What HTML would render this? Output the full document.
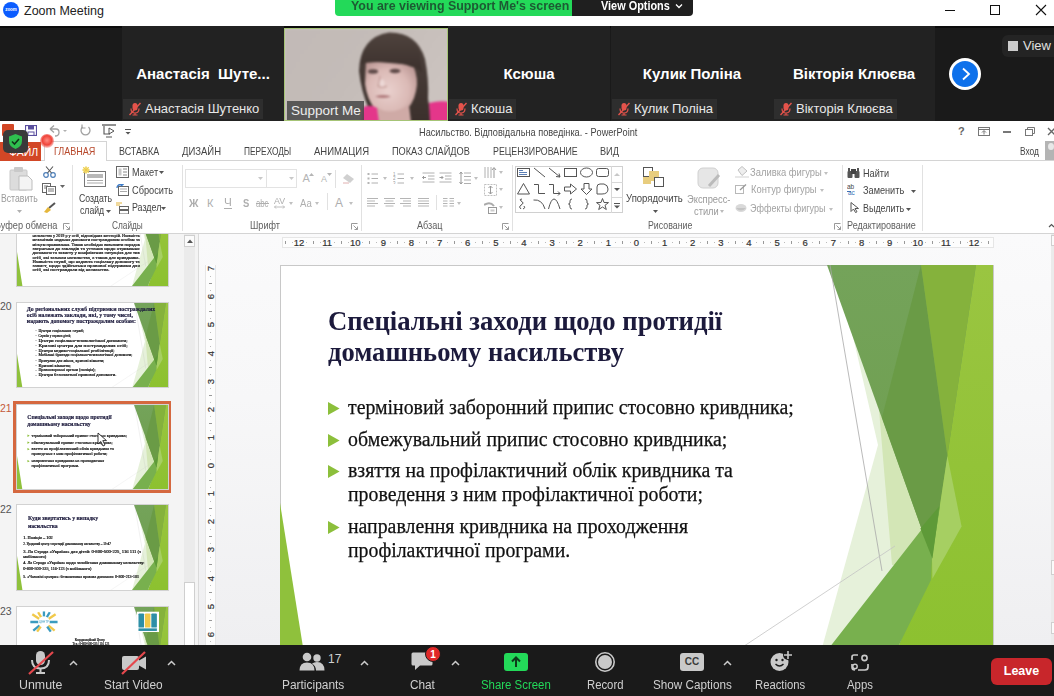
<!DOCTYPE html>
<html><head><meta charset="utf-8">
<style>
*{margin:0;padding:0;box-sizing:border-box}
html,body{width:1054px;height:696px;overflow:hidden;background:#fff;font-family:"Liberation Sans",sans-serif}
.a{position:absolute}
#top{left:0;top:0;width:1054px;height:26px;background:#fff}
#gal{left:0;top:26px;width:1054px;height:95px;background:#1a1a1a}
.tile{position:absolute;top:0;height:95px;width:162px;background:#222}
.tname{position:absolute;left:0;right:0;top:39px;text-align:center;color:#fff;font-weight:bold;font-size:15px;letter-spacing:0px}
.tlab{position:absolute;left:1px;top:73px;height:20px;background:#2e2e2e;color:#e8e8e8;font-size:13px;line-height:20px;padding-left:22px;padding-right:4px}
.mic{position:absolute;left:5px;top:3px;width:14px;height:14px}
#ppt{left:0;top:121px;width:1054px;height:524px;background:#fff}
#bar{left:0;top:645px;width:1054px;height:51px;background:#1a1a1a}
.tab{position:absolute;top:145px;font-size:10.5px;color:#444;white-space:nowrap}
.th .a{-webkit-text-stroke:0.8px currentColor !important}
.lbl{position:absolute;top:33px;color:#d0d0d0;font-size:12.5px;white-space:nowrap}
</style></head><body>
<svg width="0" height="0" style="position:absolute"><defs><symbol id="facet" viewBox="0 0 713 401">
<defs><linearGradient id="gT1" x1="0" y1="0" x2="0" y2="1"><stop offset="0" stop-color="#74a35a"/><stop offset="1" stop-color="#6e9e4d"/></linearGradient>
<linearGradient id="gB" x1="0" y1="0" x2="0" y2="1"><stop offset="0" stop-color="#9ac541"/><stop offset="1" stop-color="#8cc12f"/></linearGradient></defs>
<path d="M0 238 L26 401 L0 401Z" fill="#8fc13c"/>
<path d="M568 50 L598 180 L537 401 L713 401 L713 50Z" fill="#e6f1da"/>
<path d="M599 145 L612 300 L713 300 L713 100 L640 100Z" fill="#d3e6b6"/>
<path d="M641 0 L713 0 L713 401 L611 401 L652 293Z" fill="url(#gB)"/>
<path d="M547 0 L696 0 L652 293Z" fill="url(#gT1)"/>
<path d="M641 0 L602 152.6 L652 293 L667.4 191Z" fill="#6a9b46"/>
<path d="M641 0 L696 0 L667.4 191Z" fill="#85b23c"/>
<path d="M667.4 191 L681.6 261.5 L652.4 313.8 L652 293Z" fill="#a6cf62"/>
<path d="M535 401 L660 241 L652 293 L651 315 L619 380 L611 401Z" fill="#78b04e"/>
<path d="M640.4 263.5 L659.5 241 L652.4 293.7Z" fill="#5e9a38"/>
<path d="M550 0 L602 306" stroke="#a8a8a8" stroke-width="0.8" fill="none"/>
<path d="M615 281 L434 401" stroke="#c4c4c4" stroke-width="0.8" fill="none"/>
</symbol></defs></svg>
<!-- TITLE BAR -->
<div id="top" class="a">
  <div class="a" style="left:3px;top:2px;width:16px;height:16px;border-radius:50%;background:#0b5cff"></div>
  <div class="a" style="left:3px;top:7px;width:16px;text-align:center;font-size:4.5px;line-height:5px;color:#fff;font-weight:bold">zoom</div>
  <div class="a" style="left:24px;top:4px;font-size:12.5px;color:#222">Zoom Meeting</div>
  <div class="a" style="left:335px;top:0;width:238px;height:16px;background:#23d959;border-radius:0 0 0 4px"></div>
  <div class="a" style="left:351px;top:0px;font-size:12px;font-weight:bold;color:#1d5a33;line-height:12px;--tw:218px;transform:scaleX(1.033);transform-origin:0 0">You are viewing Support Me's screen</div>
  <div class="a" style="left:572px;top:0;width:121px;height:16px;background:#1f1f1f;border-radius:0 0 4px 0"></div>
  <div class="a" style="left:601px;top:0px;font-size:12px;font-weight:bold;color:#fff;line-height:12px;--tw:69px;transform:scaleX(0.908);transform-origin:0 0">View Options</div>
  <svg class="a" style="left:675px;top:3px" width="8" height="6"><path d="M1 1.5 L4 4.5 L7 1.5" stroke="#fff" stroke-width="1.3" fill="none"/></svg>
  <div class="a" style="left:945px;top:10px;width:10px;height:1px;background:#111"></div>
  <div class="a" style="left:990px;top:5px;width:10px;height:10px;border:1px solid #111"></div>
  <svg class="a" style="left:1035px;top:4px" width="12" height="12"><path d="M1 1 L11 11 M11 1 L1 11" stroke="#111" stroke-width="1.1"/></svg>
</div>
<!-- GALLERY -->
<div id="gal" class="a"><div class="a" style="left:0;top:0;width:1054px;height:1.5px;background:#0c0c0c"></div>
  <div class="tile" style="left:122px"><div class="tname" style="left:0;right:0">Анастасія&nbsp; Шуте...</div><div class="tlab"><svg class="mic" viewBox="0 0 14 14"><rect x="4.5" y="1" width="5" height="7.5" rx="2.5" fill="#e5534b"/><path d="M3 6.5 Q3 11 7 11 Q11 11 11 6.5 M7 11 V13 M4.5 13 H9.5" stroke="#e5534b" stroke-width="1.2" fill="none"/><path d="M1.5 13 L12.5 1" stroke="#e5534b" stroke-width="1.4"/></svg>Анастасія Шутенко</div></div>
  <div class="tile" style="left:284px;background:#cfc8c4;border:1.5px solid #a6c476;top:2px;height:93px;width:164px;overflow:hidden" id="vid"><svg class="a" style="left:0;top:0;filter:blur(0.9px)" width="164" height="93" viewBox="0 0 164 93">
<defs>
<linearGradient id="bg" x1="0" y1="0" x2="1" y2="0.4"><stop offset="0" stop-color="#c2bab7"/><stop offset="0.5" stop-color="#c4bcb8"/><stop offset="1" stop-color="#cbc3bf"/></linearGradient>
<radialGradient id="face" cx="0.45" cy="0.55" r="0.65"><stop offset="0" stop-color="#e9d0cd"/><stop offset="0.6" stop-color="#dbbab6"/><stop offset="1" stop-color="#b99592"/></radialGradient>
<linearGradient id="hair" x1="0" y1="0" x2="0" y2="1"><stop offset="0" stop-color="#4e423d"/><stop offset="1" stop-color="#3b302c"/></linearGradient>
</defs>
<rect width="164" height="93" fill="url(#bg)"/>
<path d="M74 42 Q75 8 104 3.5 Q132 3 140 30 Q144 50 143 70 L147 93 L120 93 Q116 80 114 72 L84 80 Q76 62 74 42Z" fill="url(#hair)"/>
<path d="M81 32 L128 36 Q134 50 131 62 Q128 77 118 83 L106 86 Q96 85 90 80 Q82 70 80 55Z" fill="url(#face)"/>
<path d="M92 78 Q104 88 124 76 L126 93 L90 93Z" fill="#cfaaa6"/>
<path d="M75 36 Q77 9 104 5 Q127 5 135 24 L137 44 Q132 38 127 38 Q110 31 80 34Z" fill="url(#hair)"/>
<ellipse cx="88" cy="42.5" rx="5" ry="2.2" fill="#5e4a48"/>
<ellipse cx="110" cy="42" rx="5.5" ry="2.2" fill="#5e4a48"/>
<path d="M95 47 Q94 54 93 57 Q97 60 102 57" stroke="#c49e9a" stroke-width="1.2" fill="none"/>
<ellipse cx="97" cy="54" rx="2.5" ry="3.5" fill="#f1e0de" opacity=".7"/>
<path d="M90 67.5 Q98 65 106 67.5 Q98 70 90 67.5Z" fill="#a86e70"/>
<path d="M76 93 L78 78 Q86 75 92 79 L94 93Z" fill="#e4368a"/>
<path d="M144 74 Q156 71 164 73 L164 93 L145 93Z" fill="#e4368a"/>
</svg>
<div class="a" style="left:2px;top:72px;width:77px;height:19px;background:rgba(70,70,70,.85)"></div>
<div class="a" style="left:6px;top:73px;font-size:13.5px;color:#eee;line-height:18px">Support Me</div></div>
  <div class="tile" style="left:448px"><div class="tname">Ксюша</div><div class="tlab"><svg class="mic" viewBox="0 0 14 14"><rect x="4.5" y="1" width="5" height="7.5" rx="2.5" fill="#e5534b"/><path d="M3 6.5 Q3 11 7 11 Q11 11 11 6.5 M7 11 V13 M4.5 13 H9.5" stroke="#e5534b" stroke-width="1.2" fill="none"/><path d="M1.5 13 L12.5 1" stroke="#e5534b" stroke-width="1.4"/></svg>Ксюша</div></div>
  <div class="tile" style="left:611px"><div class="tname">Кулик Поліна</div><div class="tlab"><svg class="mic" viewBox="0 0 14 14"><rect x="4.5" y="1" width="5" height="7.5" rx="2.5" fill="#e5534b"/><path d="M3 6.5 Q3 11 7 11 Q11 11 11 6.5 M7 11 V13 M4.5 13 H9.5" stroke="#e5534b" stroke-width="1.2" fill="none"/><path d="M1.5 13 L12.5 1" stroke="#e5534b" stroke-width="1.4"/></svg>Кулик Поліна</div></div>
  <div class="tile" style="left:773px"><div class="tname">Вікторія Клюєва</div><div class="tlab"><svg class="mic" viewBox="0 0 14 14"><rect x="4.5" y="1" width="5" height="7.5" rx="2.5" fill="#e5534b"/><path d="M3 6.5 Q3 11 7 11 Q11 11 11 6.5 M7 11 V13 M4.5 13 H9.5" stroke="#e5534b" stroke-width="1.2" fill="none"/><path d="M1.5 13 L12.5 1" stroke="#e5534b" stroke-width="1.4"/></svg>Вікторія Клюєва</div></div>
  <div class="a" style="left:949px;top:32px;width:32px;height:32px;border-radius:50%;background:#fff"></div>
  <div class="a" style="left:952px;top:35px;width:26px;height:26px;border-radius:50%;background:#0e71eb"></div>
  <svg class="a" style="left:959px;top:40px" width="14" height="16"><path d="M4 2.5 L10 8 L4 13.5" stroke="#fff" stroke-width="1.8" fill="none"/></svg>
  <div class="a" style="left:1002px;top:9px;width:60px;height:22px;border-radius:6px;background:#242424"></div>
  <div class="a" style="left:1008px;top:15px;width:10px;height:10px;background:#ccc"></div>
  <div class="a" style="left:1023px;top:12px;font-size:13px;color:#e0e0e0">View</div>
</div>
<!-- PPT -->
<div id="ppt" class="a" style="top:0;height:0">
<div class="a" style="left:0;top:121px;width:1054px;height:113px;background:#fff"></div>
<div class="a" style="left:0;top:160px;width:1054px;height:1px;background:#d4d4d4"></div>
<div class="a" style="left:0;top:233px;width:1054px;height:1px;background:#d4d4d4"></div>
<!-- QAT -->
<div class="a" style="left:2px;top:124px;width:12px;height:12px;background:#d24726;border-radius:1px"></div>
<svg class="a" style="left:25px;top:125px" width="12" height="11"><rect x="0.5" y="0.5" width="11" height="10" fill="none" stroke="#5a4f9e" stroke-width="1.2"/><rect x="3" y="0.5" width="6" height="4" fill="#5a4f9e"/><rect x="3" y="7" width="6" height="3.5" fill="none" stroke="#5a4f9e"/></svg>
<svg class="a" style="left:48px;top:124px" width="22" height="13"><path d="M2 5 L6 1.5 M2 5 L6 8.5 M2 5 H8 Q11 5 11 8.5 Q11 12 7 12" stroke="#a0a0a0" stroke-width="1.3" fill="none"/><path d="M15 6 L19 6 L17 8Z" fill="#b0b0b0"/></svg>
<svg class="a" style="left:79px;top:124px" width="13" height="13"><path d="M9.5 3 A4.5 4.5 0 1 1 3.5 3" stroke="#a0a0a0" stroke-width="1.3" fill="none"/><path d="M3 0.5 V4 H6.5" stroke="#a0a0a0" stroke-width="1.2" fill="none"/></svg>
<svg class="a" style="left:101px;top:124px" width="16" height="14"><path d="M1 1 H15" stroke="#555" stroke-width="1.3"/><path d="M3 2 V10 H9 M5 13 H11" stroke="#555" stroke-width="1.1" fill="none"/><path d="M8 4 L13 7 L8 10Z" fill="none" stroke="#555" stroke-width="1"/></svg>
<svg class="a" style="left:124px;top:129px" width="8" height="6"><path d="M1 0.5 H7" stroke="#555"/><path d="M1.5 3 H6.5 L4 5.5Z" fill="#555"/></svg>
<div class="a" style="left:0;top:126px;width:1054px;text-align:center;font-size:10.5px;color:#444;padding-left:0px;--tw:218.6px;transform:scaleX(0.874);transform-origin:0 0;left:419px;width:auto;text-align:left">Насильство. Відповідальна поведінка. - PowerPoint</div>
<div class="a" style="left:958px;top:125px;font-size:11px;font-weight:bold;color:#666">?</div>
<svg class="a" style="left:978px;top:127px" width="12" height="9"><rect x="0.5" y="0.5" width="11" height="8" fill="none" stroke="#777"/><path d="M0.5 2.5 H11.5 M6 7.5 V4 M4 5.5 L6 3.5 L8 5.5" stroke="#777" fill="none"/></svg>
<div class="a" style="left:1003px;top:131px;width:8px;height:2px;background:#777"></div>
<svg class="a" style="left:1025px;top:127px" width="10" height="9"><rect x="0.5" y="2.5" width="7" height="6" fill="none" stroke="#777"/><path d="M2.5 2.5 V0.5 H9.5 V6.5 H7.5" stroke="#777" fill="none"/></svg>
<svg class="a" style="left:1047px;top:127px" width="8" height="9"><path d="M1 1 L8 8 M8 1 L1 8" stroke="#666" stroke-width="1.4"/></svg>
<!-- tabs -->
<div class="a" style="left:0;top:142px;width:41px;height:19px;background:#d24726"></div>
<div class="a" style="left:9px;top:146px;font-size:10.5px;color:#fff">ФАЙЛ</div>
<div class="a" style="left:44px;top:141px;width:63px;height:20px;background:#fff;border:1px solid #d4d4d4;border-bottom:none"></div>
<div class="tab" style="left:54px;color:#b7472a;--tw:41.2px;transform:scaleX(0.858);transform-origin:0 0">ГЛАВНАЯ</div>
<div class="tab" style="left:119px;--tw:40.1px;transform:scaleX(0.853);transform-origin:0 0">ВСТАВКА</div>
<div class="tab" style="left:182px;--tw:38.9px;transform:scaleX(0.905);transform-origin:0 0">ДИЗАЙН</div>
<div class="tab" style="left:244px;--tw:47.6px;transform:scaleX(0.793);transform-origin:0 0">ПЕРЕХОДЫ</div>
<div class="tab" style="left:314px;--tw:55.2px;transform:scaleX(0.905);transform-origin:0 0">АНИМАЦИЯ</div>
<div class="tab" style="left:392px;--tw:77.9px;transform:scaleX(0.875);transform-origin:0 0">ПОКАЗ СЛАЙДОВ</div>
<div class="tab" style="left:493px;--tw:84.7px;transform:scaleX(0.839);transform-origin:0 0">РЕЦЕНЗИРОВАНИЕ</div>
<div class="tab" style="left:600px;--tw:19.2px;transform:scaleX(0.873);transform-origin:0 0">ВИД</div>
<div class="a" style="left:1020px;top:145px;font-size:10.5px;color:#444;--tw:19.1px;transform:scaleX(0.796);transform-origin:0 0">Вход</div>
<div class="a" style="left:1045px;top:141px;width:9px;height:19px;background:#b4b4b4"></div>
<div class="a" style="left:1048px;top:143px;width:6px;height:7px;border-radius:50%;background:#e8e8e8"></div>
<!--CONTENT--><div class="a" style="left:0;top:234px;width:1054px;height:411px;overflow:hidden"><div class="a" style="left:0;top:-234px;width:1054px;height:696px">
<div class="a" style="left:0;top:234px;width:198px;height:411px;background:#f4f4f4"></div>
<div class="a" style="left:198px;top:234px;width:1px;height:411px;background:#dadada"></div>
<div class="a" style="left:199px;top:234px;width:855px;height:411px;background:linear-gradient(#fafafb,#f7f7f8 40%,#efeff1)"></div>
<div class="a" style="left:184px;top:234px;width:11px;height:411px;background:#ebebeb"></div>
<div class="a" style="left:184px;top:235px;width:11px;height:12px;background:#fbfbfb;border:1px solid #cfcfcf"></div>
<svg class="a" style="left:186.5px;top:239px" width="6" height="4"><path d="M0 4 L3 0.5 L6 4Z" fill="#555"/></svg>
<div class="a" style="left:184px;top:582px;width:11px;height:70px;background:#fff;border:1px solid #cfcfcf"></div>
<div class="a" style="left:1051px;top:234px;width:3px;height:411px;background:#ebebeb"></div>
<div class="a" style="left:1051px;top:235px;width:5px;height:11px;background:#fbfbfb;border:1px solid #cfcfcf"></div>
<div class="a" style="left:1051px;top:560px;width:5px;height:15px;background:#fbfbfb;border:1px solid #cfcfcf"></div>
<div class="a" style="left:1051px;top:622px;width:5px;height:12px;background:#fbfbfb;border:1px solid #cfcfcf"></div>
<div class="a" style="left:15.5px;top:200.0px;width:153px;height:86.5px;background:#fff;border:1px solid #d2d2d2;overflow:hidden"><div class="a th" style="left:0;top:0;width:713px;height:401px;transform:scale(0.21388);transform-origin:0 0"><svg class="a" style="left:0;top:0" width="713" height="401" viewBox="0 0 713 401"><use href="#facet"/></svg><div class="a" style="left:72px;top:156.60px;font-size:16px;line-height:16px;color:#222;font-weight:normal;font-family:'Liberation Serif',serif;--tw:502px;transform:scaleX(1.215);transform-origin:0 0;white-space:nowrap">насильства у 2019 р у осіб, відповідних категорій. Наявність</div>
<div class="a" style="left:72px;top:176.40px;font-size:16px;line-height:16px;color:#222;font-weight:normal;font-family:'Liberation Serif',serif;--tw:502px;transform:scaleX(1.335);transform-origin:0 0;white-space:nowrap">механізмів надання допомоги постраждалим особам за</div>
<div class="a" style="left:72px;top:196.20px;font-size:16px;line-height:16px;color:#222;font-weight:normal;font-family:'Liberation Serif',serif;--tw:502px;transform:scaleX(1.287);transform-origin:0 0;white-space:nowrap">місцем проживання. Також необхідно визначити порядок</div>
<div class="a" style="left:72px;top:216.00px;font-size:16px;line-height:16px;color:#222;font-weight:normal;font-family:'Liberation Serif',serif;--tw:502px;transform:scaleX(1.464);transform-origin:0 0;white-space:nowrap">звернення до закладів та установ щодо отримання</div>
<div class="a" style="left:72px;top:235.80px;font-size:16px;line-height:16px;color:#222;font-weight:normal;font-family:'Liberation Serif',serif;--tw:502px;transform:scaleX(1.372);transform-origin:0 0;white-space:nowrap">допомоги та захисту у конфліктних ситуаціях для тих</div>
<div class="a" style="left:72px;top:255.60px;font-size:16px;line-height:16px;color:#222;font-weight:normal;font-family:'Liberation Serif',serif;--tw:502px;transform:scaleX(1.406);transform-origin:0 0;white-space:nowrap">осіб, які зазнали насильства, а також для кривдника.</div>
<div class="a" style="left:72px;top:275.40px;font-size:16px;line-height:16px;color:#222;font-weight:normal;font-family:'Liberation Serif',serif;--tw:502px;transform:scaleX(1.387);transform-origin:0 0;white-space:nowrap">Наявність служб, що надають соціальну допомогу та</div>
<div class="a" style="left:72px;top:295.20px;font-size:16px;line-height:16px;color:#222;font-weight:normal;font-family:'Liberation Serif',serif;--tw:502px;transform:scaleX(1.517);transform-origin:0 0;white-space:nowrap">захист, щодо здійснення правової підтримки для</div>
<div class="a" style="left:72px;top:315.00px;font-size:16px;line-height:16px;color:#222;font-weight:normal;font-family:'Liberation Serif',serif;--tw:360px;transform:scaleX(1.406);transform-origin:0 0;white-space:nowrap">осіб, які постраждали від насильства.</div>
</div></div>
<div class="a" style="left:0px;top:199.61px;font-size:10.5px;line-height:10.5px;color:#555;font-weight:normal;white-space:nowrap">19</div>
<div class="a" style="left:15.5px;top:301.5px;width:153px;height:86.5px;background:#fff;border:1px solid #d2d2d2;overflow:hidden"><div class="a th" style="left:0;top:0;width:713px;height:401px;transform:scale(0.21388);transform-origin:0 0"><svg class="a" style="left:0;top:0" width="713" height="401" viewBox="0 0 713 401"><use href="#facet"/></svg><div class="a" style="left:46px;top:17.39px;font-size:27px;line-height:27px;color:#1c1a3c;font-weight:bold;font-family:'Liberation Serif',serif;white-space:nowrap">До регіональних служб підтримки постраждалих</div>
<div class="a" style="left:46px;top:45.39px;font-size:27px;line-height:27px;color:#1c1a3c;font-weight:bold;font-family:'Liberation Serif',serif;white-space:nowrap">осіб належать заклади, які, у тому числі,</div>
<div class="a" style="left:46px;top:73.39px;font-size:27px;line-height:27px;color:#1c1a3c;font-weight:bold;font-family:'Liberation Serif',serif;white-space:nowrap">надають допомогу постраждалим особам:</div>
<div class="a" style="left:100px;top:122.44px;font-size:15px;line-height:15px;color:#222;font-weight:normal;font-family:'Liberation Serif',serif;--tw:214px;transform:scaleX(1.259);transform-origin:0 0;white-space:nowrap">Центри соціальних служб;</div>
<div class="a" style="left:86px;top:129.0px;width:6px;height:2px;background:#444"></div><div class="a" style="left:100px;top:145.64px;font-size:15px;line-height:15px;color:#222;font-weight:normal;font-family:'Liberation Serif',serif;--tw:152px;transform:scaleX(0.974);transform-origin:0 0;white-space:nowrap">Служби у справах дітей;</div>
<div class="a" style="left:86px;top:152.2px;width:6px;height:2px;background:#444"></div><div class="a" style="left:100px;top:168.84px;font-size:15px;line-height:15px;color:#222;font-weight:normal;font-family:'Liberation Serif',serif;--tw:416px;transform:scaleX(1.496);transform-origin:0 0;white-space:nowrap">Центри соціально-психологічної допомоги;</div>
<div class="a" style="left:86px;top:175.4px;width:6px;height:2px;background:#444"></div><div class="a" style="left:100px;top:192.04px;font-size:15px;line-height:15px;color:#222;font-weight:normal;font-family:'Liberation Serif',serif;--tw:418px;transform:scaleX(1.646);transform-origin:0 0;white-space:nowrap">Кризові центри для постраждалих осіб;</div>
<div class="a" style="left:86px;top:198.6px;width:6px;height:2px;background:#444"></div><div class="a" style="left:100px;top:215.24px;font-size:15px;line-height:15px;color:#222;font-weight:normal;font-family:'Liberation Serif',serif;--tw:355px;transform:scaleX(1.414);transform-origin:0 0;white-space:nowrap">Центри медико-соціальної реабілітації;</div>
<div class="a" style="left:86px;top:221.8px;width:6px;height:2px;background:#444"></div><div class="a" style="left:100px;top:238.44px;font-size:15px;line-height:15px;color:#222;font-weight:normal;font-family:'Liberation Serif',serif;--tw:440px;transform:scaleX(1.275);transform-origin:0 0;white-space:nowrap">Мобільні бригади соціально-психологічної допомоги;</div>
<div class="a" style="left:86px;top:245.0px;width:6px;height:2px;background:#444"></div><div class="a" style="left:100px;top:261.64px;font-size:15px;line-height:15px;color:#222;font-weight:normal;font-family:'Liberation Serif',serif;--tw:308px;transform:scaleX(1.273);transform-origin:0 0;white-space:nowrap">Притулки для жінок, кризові кімнати;</div>
<div class="a" style="left:86px;top:268.2px;width:6px;height:2px;background:#444"></div><div class="a" style="left:100px;top:284.84px;font-size:15px;line-height:15px;color:#222;font-weight:normal;font-family:'Liberation Serif',serif;--tw:152px;transform:scaleX(1.407);transform-origin:0 0;white-space:nowrap">Кризові кімнати;</div>
<div class="a" style="left:86px;top:291.4px;width:6px;height:2px;background:#444"></div><div class="a" style="left:100px;top:308.04px;font-size:15px;line-height:15px;color:#222;font-weight:normal;font-family:'Liberation Serif',serif;--tw:268px;transform:scaleX(1.288);transform-origin:0 0;white-space:nowrap">Правоохоронні органи (поліція);</div>
<div class="a" style="left:86px;top:314.6px;width:6px;height:2px;background:#444"></div><div class="a" style="left:100px;top:331.24px;font-size:15px;line-height:15px;color:#222;font-weight:normal;font-family:'Liberation Serif',serif;--tw:364px;transform:scaleX(1.427);transform-origin:0 0;white-space:nowrap">Центри безоплатної правової допомоги.</div>
<div class="a" style="left:86px;top:337.8px;width:6px;height:2px;background:#444"></div></div></div>
<div class="a" style="left:0px;top:301.11px;font-size:10.5px;line-height:10.5px;color:#555;font-weight:normal;white-space:nowrap">20</div>
<div class="a" style="left:13px;top:400.5px;width:158px;height:92px;background:#d5683f"></div>
<div class="a" style="left:15.5px;top:403.5px;width:153px;height:86.5px;background:#fff;border:1px solid #d2d2d2;overflow:hidden"><div class="a th" style="left:0;top:0;width:713px;height:401px;transform:scale(0.21388);transform-origin:0 0"><svg class="a" style="left:0;top:0" width="713" height="401" viewBox="0 0 713 401"><use href="#facet"/></svg><div class="a" style="left:48px;top:43.15px;font-size:26.8px;line-height:26.8px;color:#1c1a3c;font-weight:bold;font-family:'Liberation Serif',serif;--tw:394px;transform:scaleX(0.995);transform-origin:0 0;white-space:nowrap">Спеціальні заходи щодо протидії</div>
<div class="a" style="left:48px;top:74.46px;font-size:26.8px;line-height:26.8px;color:#1c1a3c;font-weight:bold;font-family:'Liberation Serif',serif;--tw:296.4px;transform:scaleX(0.991);transform-origin:0 0;white-space:nowrap">домашньому насильству</div>
<div class="a" style="left:68px;top:132.25px;font-size:20px;line-height:20px;color:#111;font-weight:normal;font-family:'Liberation Serif',serif;transform:scaleX(0.99);transform-origin:0 0;-webkit-text-stroke:0.25px #111;white-space:nowrap">терміновий заборонний припис стосовно кривдника;</div>
<div class="a" style="left:68px;top:164.25px;font-size:20px;line-height:20px;color:#111;font-weight:normal;font-family:'Liberation Serif',serif;transform:scaleX(0.99);transform-origin:0 0;-webkit-text-stroke:0.25px #111;white-space:nowrap">обмежувальний припис стосовно кривдника;</div>
<div class="a" style="left:68px;top:195.25px;font-size:20px;line-height:20px;color:#111;font-weight:normal;font-family:'Liberation Serif',serif;transform:scaleX(0.99);transform-origin:0 0;-webkit-text-stroke:0.25px #111;white-space:nowrap">взяття на профілактичний облік кривдника та</div>
<div class="a" style="left:68px;top:219.25px;font-size:20px;line-height:20px;color:#111;font-weight:normal;font-family:'Liberation Serif',serif;transform:scaleX(0.99);transform-origin:0 0;-webkit-text-stroke:0.25px #111;white-space:nowrap">проведення з ним профілактичної роботи;</div>
<div class="a" style="left:68px;top:251.25px;font-size:20px;line-height:20px;color:#111;font-weight:normal;font-family:'Liberation Serif',serif;transform:scaleX(0.99);transform-origin:0 0;-webkit-text-stroke:0.25px #111;white-space:nowrap">направлення кривдника на проходження</div>
<div class="a" style="left:68px;top:275.25px;font-size:20px;line-height:20px;color:#111;font-weight:normal;font-family:'Liberation Serif',serif;transform:scaleX(0.99);transform-origin:0 0;-webkit-text-stroke:0.25px #111;white-space:nowrap">профілактичної програми.</div>
<svg class="a" style="left:48px;top:136.5px" width="12" height="13"><path d="M0 0 L11.6 6.5 L0 13Z" fill="#8cbf3b"/></svg><svg class="a" style="left:48px;top:168.5px" width="12" height="13"><path d="M0 0 L11.6 6.5 L0 13Z" fill="#8cbf3b"/></svg><svg class="a" style="left:48px;top:199.5px" width="12" height="13"><path d="M0 0 L11.6 6.5 L0 13Z" fill="#8cbf3b"/></svg><svg class="a" style="left:48px;top:255.5px" width="12" height="13"><path d="M0 0 L11.6 6.5 L0 13Z" fill="#8cbf3b"/></svg></div></div>
<div class="a" style="left:0px;top:403.11px;font-size:10.5px;line-height:10.5px;color:#c4593a;font-weight:normal;white-space:nowrap">21</div>
<div class="a" style="left:15.5px;top:504.2px;width:153px;height:86.5px;background:#fff;border:1px solid #d2d2d2;overflow:hidden"><div class="a th" style="left:0;top:0;width:713px;height:401px;transform:scale(0.21388);transform-origin:0 0"><svg class="a" style="left:0;top:0" width="713" height="401" viewBox="0 0 713 401"><use href="#facet"/></svg><div class="a" style="left:51px;top:47.39px;font-size:27px;line-height:27px;color:#1c1a3c;font-weight:bold;font-family:'Liberation Serif',serif;white-space:nowrap">Куди звертатись у випадку</div>
<div class="a" style="left:51px;top:85.39px;font-size:27px;line-height:27px;color:#1c1a3c;font-weight:bold;font-family:'Liberation Serif',serif;white-space:nowrap">насильства</div>
<div class="a" style="left:29px;top:146.28px;font-size:14px;line-height:14px;color:#222;font-weight:normal;font-family:'Liberation Serif',serif;--tw:139px;transform:scaleX(1.463);transform-origin:0 0;white-space:nowrap">1. Поліція – 102</div>
<div class="a" style="left:29px;top:178.28px;font-size:14px;line-height:14px;color:#222;font-weight:normal;font-family:'Liberation Serif',serif;--tw:410px;transform:scaleX(1.114);transform-origin:0 0;white-space:nowrap">2. Урядовий центр з протидії домашньому насильству – 15-47</div>
<div class="a" style="left:29px;top:213.28px;font-size:14px;line-height:14px;color:#222;font-weight:normal;font-family:'Liberation Serif',serif;--tw:550px;transform:scaleX(1.558);transform-origin:0 0;white-space:nowrap">3. Ла Страда «Україна» для дітей: 0-800-500-225, 116 111 (з</div>
<div class="a" style="left:29px;top:238.28px;font-size:14px;line-height:14px;color:#222;font-weight:normal;font-family:'Liberation Serif',serif;--tw:108px;transform:scaleX(1.500);transform-origin:0 0;white-space:nowrap">мобільного)</div>
<div class="a" style="left:29px;top:264.27px;font-size:14px;line-height:14px;color:#222;font-weight:normal;font-family:'Liberation Serif',serif;--tw:567px;transform:scaleX(1.414);transform-origin:0 0;white-space:nowrap">4. Ла Страда «Україна» щодо запобігання домашньому насильству:</div>
<div class="a" style="left:29px;top:292.27px;font-size:14px;line-height:14px;color:#222;font-weight:normal;font-family:'Liberation Serif',serif;--tw:319px;transform:scaleX(1.412);transform-origin:0 0;white-space:nowrap">0-800-500-335, 116-123 (з мобільного)</div>
<div class="a" style="left:29px;top:331.27px;font-size:14px;line-height:14px;color:#222;font-weight:normal;font-family:'Liberation Serif',serif;--tw:541px;transform:scaleX(1.320);transform-origin:0 0;white-space:nowrap">5. «Чоловічі центри»: безкоштовна правова допомога: 0-800-213-103</div>
</div></div>
<div class="a" style="left:0px;top:503.81px;font-size:10.5px;line-height:10.5px;color:#555;font-weight:normal;white-space:nowrap">22</div>
<div class="a" style="left:15.5px;top:606.2px;width:153px;height:86.5px;background:#fff;border:1px solid #d2d2d2;overflow:hidden"><div class="a th" style="left:0;top:0;width:713px;height:401px;transform:scale(0.21388);transform-origin:0 0"><svg class="a" style="left:0;top:0" width="713" height="401" viewBox="0 0 713 401"><use href="#facet"/></svg><svg class="a" style="left:56px;top:20px" width="140" height="100" viewBox="0 0 30 22"><g stroke-width="2.4"><path d="M15 11 L3 3" stroke="#f1c94a"/><path d="M15 11 L27 3" stroke="#f1c94a"/><path d="M15 11 L1 11" stroke="#3a9bbf"/><path d="M15 11 L29 11" stroke="#3a9bbf"/><path d="M15 11 L4 20" stroke="#3a9bbf"/><path d="M15 11 L26 20" stroke="#f1c94a"/><path d="M15 11 L15 0" stroke="#3a9bbf"/><path d="M15 11 L9 1" stroke="#f1c94a"/><path d="M15 11 L21 1" stroke="#3a9bbf"/><path d="M15 11 L8 21" stroke="#f1c94a"/><path d="M15 11 L22 21" stroke="#3a9bbf"/></g><circle cx="15" cy="11" r="6" fill="#fff"/><text x="15" y="12.5" font-size="3" text-anchor="middle" fill="#3a9bbf">ЦЕНТР</text></svg><div class="a" style="left:560px;top:22px;width:104px;height:95px;background:#fff"></div><div class="a" style="left:568px;top:30px;width:26px;height:66px;background:#2e8fa6;border-radius:4px"></div><div class="a" style="left:598px;top:30px;width:26px;height:66px;background:#f1c94a;border-radius:4px"></div><div class="a" style="left:628px;top:30px;width:26px;height:66px;background:#2e8fa6;border-radius:4px"></div><div class="a" style="left:568px;top:100px;width:86px;height:12px;background:#2e8fa6"></div><div class="a" style="left:270px;top:148.28px;font-size:14px;line-height:14px;color:#222;font-weight:normal;font-family:'Liberation Serif',serif;white-space:nowrap">Координаційний Центр</div>
<div class="a" style="left:260px;top:166.28px;font-size:14px;line-height:14px;color:#222;font-weight:normal;font-family:'Liberation Serif',serif;white-space:nowrap">Тел.: 0-800-500-335 | 116 123</div>
</div></div>
<div class="a" style="left:0px;top:605.81px;font-size:10.5px;line-height:10.5px;color:#555;font-weight:normal;white-space:nowrap">23</div>
<svg class="a" style="left:97px;top:432px" width="11" height="15"><path d="M1 1 V12 L3.8 9.5 L6 14 L8 13 L5.8 8.6 H9.5Z" fill="#fff" stroke="#222" stroke-width="0.9"/></svg>
<div class="a" style="left:204.5px;top:265px;width:11px;height:380px;background:#fdfdfd;border-left:1px solid #e6e6e6;border-right:1px solid #e6e6e6"></div>
<div class="a" style="left:281.5px;top:237px;width:712px;height:11px;background:#fdfdfd;border:1px solid #e6e6e6"></div>
<div class="a" style="left:288.94px;top:237px;width:20px;text-align:center;font-size:9.5px;line-height:11px;color:#333;-webkit-text-stroke:0.2px #333">12</div>
<div class="a" style="left:306.0px;top:242.0px;width:1px;height:1px;background:#bbb"></div>
<div class="a" style="left:313.0px;top:241.0px;width:1px;height:3px;background:#999"></div>
<div class="a" style="left:320.0px;top:242.0px;width:1px;height:1px;background:#bbb"></div>
<div class="a" style="left:291.9px;top:242.0px;width:1px;height:1px;background:#bbb"></div>
<div class="a" style="left:284.9px;top:241.0px;width:1px;height:3px;background:#999"></div>
<div class="a" style="left:317.07px;top:237px;width:20px;text-align:center;font-size:9.5px;line-height:11px;color:#333;-webkit-text-stroke:0.2px #333">11</div>
<div class="a" style="left:334.1px;top:242.0px;width:1px;height:1px;background:#bbb"></div>
<div class="a" style="left:341.1px;top:241.0px;width:1px;height:3px;background:#999"></div>
<div class="a" style="left:348.2px;top:242.0px;width:1px;height:1px;background:#bbb"></div>
<div class="a" style="left:345.2px;top:237px;width:20px;text-align:center;font-size:9.5px;line-height:11px;color:#333;-webkit-text-stroke:0.2px #333">10</div>
<div class="a" style="left:362.2px;top:242.0px;width:1px;height:1px;background:#bbb"></div>
<div class="a" style="left:369.3px;top:241.0px;width:1px;height:3px;background:#999"></div>
<div class="a" style="left:376.3px;top:242.0px;width:1px;height:1px;background:#bbb"></div>
<div class="a" style="left:373.33000000000004px;top:237px;width:20px;text-align:center;font-size:9.5px;line-height:11px;color:#333;-webkit-text-stroke:0.2px #333">9</div>
<div class="a" style="left:390.4px;top:242.0px;width:1px;height:1px;background:#bbb"></div>
<div class="a" style="left:397.4px;top:241.0px;width:1px;height:3px;background:#999"></div>
<div class="a" style="left:404.4px;top:242.0px;width:1px;height:1px;background:#bbb"></div>
<div class="a" style="left:401.46000000000004px;top:237px;width:20px;text-align:center;font-size:9.5px;line-height:11px;color:#333;-webkit-text-stroke:0.2px #333">8</div>
<div class="a" style="left:418.5px;top:242.0px;width:1px;height:1px;background:#bbb"></div>
<div class="a" style="left:425.5px;top:241.0px;width:1px;height:3px;background:#999"></div>
<div class="a" style="left:432.6px;top:242.0px;width:1px;height:1px;background:#bbb"></div>
<div class="a" style="left:429.59000000000003px;top:237px;width:20px;text-align:center;font-size:9.5px;line-height:11px;color:#333;-webkit-text-stroke:0.2px #333">7</div>
<div class="a" style="left:446.6px;top:242.0px;width:1px;height:1px;background:#bbb"></div>
<div class="a" style="left:453.7px;top:241.0px;width:1px;height:3px;background:#999"></div>
<div class="a" style="left:460.7px;top:242.0px;width:1px;height:1px;background:#bbb"></div>
<div class="a" style="left:457.72px;top:237px;width:20px;text-align:center;font-size:9.5px;line-height:11px;color:#333;-webkit-text-stroke:0.2px #333">6</div>
<div class="a" style="left:474.8px;top:242.0px;width:1px;height:1px;background:#bbb"></div>
<div class="a" style="left:481.8px;top:241.0px;width:1px;height:3px;background:#999"></div>
<div class="a" style="left:488.8px;top:242.0px;width:1px;height:1px;background:#bbb"></div>
<div class="a" style="left:485.85px;top:237px;width:20px;text-align:center;font-size:9.5px;line-height:11px;color:#333;-webkit-text-stroke:0.2px #333">5</div>
<div class="a" style="left:502.9px;top:242.0px;width:1px;height:1px;background:#bbb"></div>
<div class="a" style="left:509.9px;top:241.0px;width:1px;height:3px;background:#999"></div>
<div class="a" style="left:516.9px;top:242.0px;width:1px;height:1px;background:#bbb"></div>
<div class="a" style="left:513.98px;top:237px;width:20px;text-align:center;font-size:9.5px;line-height:11px;color:#333;-webkit-text-stroke:0.2px #333">4</div>
<div class="a" style="left:531.0px;top:242.0px;width:1px;height:1px;background:#bbb"></div>
<div class="a" style="left:538.0px;top:241.0px;width:1px;height:3px;background:#999"></div>
<div class="a" style="left:545.1px;top:242.0px;width:1px;height:1px;background:#bbb"></div>
<div class="a" style="left:542.11px;top:237px;width:20px;text-align:center;font-size:9.5px;line-height:11px;color:#333;-webkit-text-stroke:0.2px #333">3</div>
<div class="a" style="left:559.1px;top:242.0px;width:1px;height:1px;background:#bbb"></div>
<div class="a" style="left:566.2px;top:241.0px;width:1px;height:3px;background:#999"></div>
<div class="a" style="left:573.2px;top:242.0px;width:1px;height:1px;background:#bbb"></div>
<div class="a" style="left:570.24px;top:237px;width:20px;text-align:center;font-size:9.5px;line-height:11px;color:#333;-webkit-text-stroke:0.2px #333">2</div>
<div class="a" style="left:587.3px;top:242.0px;width:1px;height:1px;background:#bbb"></div>
<div class="a" style="left:594.3px;top:241.0px;width:1px;height:3px;background:#999"></div>
<div class="a" style="left:601.3px;top:242.0px;width:1px;height:1px;background:#bbb"></div>
<div class="a" style="left:598.37px;top:237px;width:20px;text-align:center;font-size:9.5px;line-height:11px;color:#333;-webkit-text-stroke:0.2px #333">1</div>
<div class="a" style="left:615.4px;top:242.0px;width:1px;height:1px;background:#bbb"></div>
<div class="a" style="left:622.4px;top:241.0px;width:1px;height:3px;background:#999"></div>
<div class="a" style="left:629.5px;top:242.0px;width:1px;height:1px;background:#bbb"></div>
<div class="a" style="left:626.5px;top:237px;width:20px;text-align:center;font-size:9.5px;line-height:11px;color:#333;-webkit-text-stroke:0.2px #333">0</div>
<div class="a" style="left:643.5px;top:242.0px;width:1px;height:1px;background:#bbb"></div>
<div class="a" style="left:650.6px;top:241.0px;width:1px;height:3px;background:#999"></div>
<div class="a" style="left:657.6px;top:242.0px;width:1px;height:1px;background:#bbb"></div>
<div class="a" style="left:654.63px;top:237px;width:20px;text-align:center;font-size:9.5px;line-height:11px;color:#333;-webkit-text-stroke:0.2px #333">1</div>
<div class="a" style="left:671.7px;top:242.0px;width:1px;height:1px;background:#bbb"></div>
<div class="a" style="left:678.7px;top:241.0px;width:1px;height:3px;background:#999"></div>
<div class="a" style="left:685.7px;top:242.0px;width:1px;height:1px;background:#bbb"></div>
<div class="a" style="left:682.76px;top:237px;width:20px;text-align:center;font-size:9.5px;line-height:11px;color:#333;-webkit-text-stroke:0.2px #333">2</div>
<div class="a" style="left:699.8px;top:242.0px;width:1px;height:1px;background:#bbb"></div>
<div class="a" style="left:706.8px;top:241.0px;width:1px;height:3px;background:#999"></div>
<div class="a" style="left:713.9px;top:242.0px;width:1px;height:1px;background:#bbb"></div>
<div class="a" style="left:710.89px;top:237px;width:20px;text-align:center;font-size:9.5px;line-height:11px;color:#333;-webkit-text-stroke:0.2px #333">3</div>
<div class="a" style="left:727.9px;top:242.0px;width:1px;height:1px;background:#bbb"></div>
<div class="a" style="left:735.0px;top:241.0px;width:1px;height:3px;background:#999"></div>
<div class="a" style="left:742.0px;top:242.0px;width:1px;height:1px;background:#bbb"></div>
<div class="a" style="left:739.02px;top:237px;width:20px;text-align:center;font-size:9.5px;line-height:11px;color:#333;-webkit-text-stroke:0.2px #333">4</div>
<div class="a" style="left:756.1px;top:242.0px;width:1px;height:1px;background:#bbb"></div>
<div class="a" style="left:763.1px;top:241.0px;width:1px;height:3px;background:#999"></div>
<div class="a" style="left:770.1px;top:242.0px;width:1px;height:1px;background:#bbb"></div>
<div class="a" style="left:767.15px;top:237px;width:20px;text-align:center;font-size:9.5px;line-height:11px;color:#333;-webkit-text-stroke:0.2px #333">5</div>
<div class="a" style="left:784.2px;top:242.0px;width:1px;height:1px;background:#bbb"></div>
<div class="a" style="left:791.2px;top:241.0px;width:1px;height:3px;background:#999"></div>
<div class="a" style="left:798.2px;top:242.0px;width:1px;height:1px;background:#bbb"></div>
<div class="a" style="left:795.28px;top:237px;width:20px;text-align:center;font-size:9.5px;line-height:11px;color:#333;-webkit-text-stroke:0.2px #333">6</div>
<div class="a" style="left:812.3px;top:242.0px;width:1px;height:1px;background:#bbb"></div>
<div class="a" style="left:819.3px;top:241.0px;width:1px;height:3px;background:#999"></div>
<div class="a" style="left:826.4px;top:242.0px;width:1px;height:1px;background:#bbb"></div>
<div class="a" style="left:823.41px;top:237px;width:20px;text-align:center;font-size:9.5px;line-height:11px;color:#333;-webkit-text-stroke:0.2px #333">7</div>
<div class="a" style="left:840.4px;top:242.0px;width:1px;height:1px;background:#bbb"></div>
<div class="a" style="left:847.5px;top:241.0px;width:1px;height:3px;background:#999"></div>
<div class="a" style="left:854.5px;top:242.0px;width:1px;height:1px;background:#bbb"></div>
<div class="a" style="left:851.54px;top:237px;width:20px;text-align:center;font-size:9.5px;line-height:11px;color:#333;-webkit-text-stroke:0.2px #333">8</div>
<div class="a" style="left:868.6px;top:242.0px;width:1px;height:1px;background:#bbb"></div>
<div class="a" style="left:875.6px;top:241.0px;width:1px;height:3px;background:#999"></div>
<div class="a" style="left:882.6px;top:242.0px;width:1px;height:1px;background:#bbb"></div>
<div class="a" style="left:879.67px;top:237px;width:20px;text-align:center;font-size:9.5px;line-height:11px;color:#333;-webkit-text-stroke:0.2px #333">9</div>
<div class="a" style="left:896.7px;top:242.0px;width:1px;height:1px;background:#bbb"></div>
<div class="a" style="left:903.7px;top:241.0px;width:1px;height:3px;background:#999"></div>
<div class="a" style="left:910.8px;top:242.0px;width:1px;height:1px;background:#bbb"></div>
<div class="a" style="left:907.8px;top:237px;width:20px;text-align:center;font-size:9.5px;line-height:11px;color:#333;-webkit-text-stroke:0.2px #333">10</div>
<div class="a" style="left:924.8px;top:242.0px;width:1px;height:1px;background:#bbb"></div>
<div class="a" style="left:931.9px;top:241.0px;width:1px;height:3px;background:#999"></div>
<div class="a" style="left:938.9px;top:242.0px;width:1px;height:1px;background:#bbb"></div>
<div class="a" style="left:935.9300000000001px;top:237px;width:20px;text-align:center;font-size:9.5px;line-height:11px;color:#333;-webkit-text-stroke:0.2px #333">11</div>
<div class="a" style="left:953.0px;top:242.0px;width:1px;height:1px;background:#bbb"></div>
<div class="a" style="left:960.0px;top:241.0px;width:1px;height:3px;background:#999"></div>
<div class="a" style="left:967.0px;top:242.0px;width:1px;height:1px;background:#bbb"></div>
<div class="a" style="left:964.06px;top:237px;width:20px;text-align:center;font-size:9.5px;line-height:11px;color:#333;-webkit-text-stroke:0.2px #333">12</div>
<div class="a" style="left:981.1px;top:242.0px;width:1px;height:1px;background:#bbb"></div>
<div class="a" style="left:988.1px;top:241.0px;width:1px;height:3px;background:#999"></div>
<div class="a" style="left:200px;top:263.1px;width:20px;height:11px;text-align:center;font-size:9.5px;line-height:11px;color:#333;-webkit-text-stroke:0.2px #333;transform:rotate(-90deg)">7</div>
<div class="a" style="left:209.5px;top:275.6px;width:1px;height:1px;background:#bbb"></div>
<div class="a" style="left:208.5px;top:282.7px;width:3px;height:1px;background:#999"></div>
<div class="a" style="left:209.5px;top:289.7px;width:1px;height:1px;background:#bbb"></div>
<div class="a" style="left:200px;top:291.2px;width:20px;height:11px;text-align:center;font-size:9.5px;line-height:11px;color:#333;-webkit-text-stroke:0.2px #333;transform:rotate(-90deg)">6</div>
<div class="a" style="left:209.5px;top:303.8px;width:1px;height:1px;background:#bbb"></div>
<div class="a" style="left:208.5px;top:310.8px;width:3px;height:1px;background:#999"></div>
<div class="a" style="left:209.5px;top:317.8px;width:1px;height:1px;background:#bbb"></div>
<div class="a" style="left:200px;top:319.4px;width:20px;height:11px;text-align:center;font-size:9.5px;line-height:11px;color:#333;-webkit-text-stroke:0.2px #333;transform:rotate(-90deg)">5</div>
<div class="a" style="left:209.5px;top:331.9px;width:1px;height:1px;background:#bbb"></div>
<div class="a" style="left:208.5px;top:338.9px;width:3px;height:1px;background:#999"></div>
<div class="a" style="left:209.5px;top:345.9px;width:1px;height:1px;background:#bbb"></div>
<div class="a" style="left:200px;top:347.5px;width:20px;height:11px;text-align:center;font-size:9.5px;line-height:11px;color:#333;-webkit-text-stroke:0.2px #333;transform:rotate(-90deg)">4</div>
<div class="a" style="left:209.5px;top:360.0px;width:1px;height:1px;background:#bbb"></div>
<div class="a" style="left:208.5px;top:367.0px;width:3px;height:1px;background:#999"></div>
<div class="a" style="left:209.5px;top:374.1px;width:1px;height:1px;background:#bbb"></div>
<div class="a" style="left:200px;top:375.6px;width:20px;height:11px;text-align:center;font-size:9.5px;line-height:11px;color:#333;-webkit-text-stroke:0.2px #333;transform:rotate(-90deg)">3</div>
<div class="a" style="left:209.5px;top:388.1px;width:1px;height:1px;background:#bbb"></div>
<div class="a" style="left:208.5px;top:395.2px;width:3px;height:1px;background:#999"></div>
<div class="a" style="left:209.5px;top:402.2px;width:1px;height:1px;background:#bbb"></div>
<div class="a" style="left:200px;top:403.7px;width:20px;height:11px;text-align:center;font-size:9.5px;line-height:11px;color:#333;-webkit-text-stroke:0.2px #333;transform:rotate(-90deg)">2</div>
<div class="a" style="left:209.5px;top:416.3px;width:1px;height:1px;background:#bbb"></div>
<div class="a" style="left:208.5px;top:423.3px;width:3px;height:1px;background:#999"></div>
<div class="a" style="left:209.5px;top:430.3px;width:1px;height:1px;background:#bbb"></div>
<div class="a" style="left:200px;top:431.9px;width:20px;height:11px;text-align:center;font-size:9.5px;line-height:11px;color:#333;-webkit-text-stroke:0.2px #333;transform:rotate(-90deg)">1</div>
<div class="a" style="left:209.5px;top:444.4px;width:1px;height:1px;background:#bbb"></div>
<div class="a" style="left:208.5px;top:451.4px;width:3px;height:1px;background:#999"></div>
<div class="a" style="left:209.5px;top:458.5px;width:1px;height:1px;background:#bbb"></div>
<div class="a" style="left:200px;top:460.0px;width:20px;height:11px;text-align:center;font-size:9.5px;line-height:11px;color:#333;-webkit-text-stroke:0.2px #333;transform:rotate(-90deg)">0</div>
<div class="a" style="left:209.5px;top:472.5px;width:1px;height:1px;background:#bbb"></div>
<div class="a" style="left:208.5px;top:479.6px;width:3px;height:1px;background:#999"></div>
<div class="a" style="left:209.5px;top:486.6px;width:1px;height:1px;background:#bbb"></div>
<div class="a" style="left:200px;top:488.1px;width:20px;height:11px;text-align:center;font-size:9.5px;line-height:11px;color:#333;-webkit-text-stroke:0.2px #333;transform:rotate(-90deg)">1</div>
<div class="a" style="left:209.5px;top:500.7px;width:1px;height:1px;background:#bbb"></div>
<div class="a" style="left:208.5px;top:507.7px;width:3px;height:1px;background:#999"></div>
<div class="a" style="left:209.5px;top:514.7px;width:1px;height:1px;background:#bbb"></div>
<div class="a" style="left:200px;top:516.3px;width:20px;height:11px;text-align:center;font-size:9.5px;line-height:11px;color:#333;-webkit-text-stroke:0.2px #333;transform:rotate(-90deg)">2</div>
<div class="a" style="left:209.5px;top:528.8px;width:1px;height:1px;background:#bbb"></div>
<div class="a" style="left:208.5px;top:535.8px;width:3px;height:1px;background:#999"></div>
<div class="a" style="left:209.5px;top:542.9px;width:1px;height:1px;background:#bbb"></div>
<div class="a" style="left:200px;top:544.4px;width:20px;height:11px;text-align:center;font-size:9.5px;line-height:11px;color:#333;-webkit-text-stroke:0.2px #333;transform:rotate(-90deg)">3</div>
<div class="a" style="left:209.5px;top:556.9px;width:1px;height:1px;background:#bbb"></div>
<div class="a" style="left:208.5px;top:564.0px;width:3px;height:1px;background:#999"></div>
<div class="a" style="left:209.5px;top:571.0px;width:1px;height:1px;background:#bbb"></div>
<div class="a" style="left:200px;top:572.5px;width:20px;height:11px;text-align:center;font-size:9.5px;line-height:11px;color:#333;-webkit-text-stroke:0.2px #333;transform:rotate(-90deg)">4</div>
<div class="a" style="left:209.5px;top:585.1px;width:1px;height:1px;background:#bbb"></div>
<div class="a" style="left:208.5px;top:592.1px;width:3px;height:1px;background:#999"></div>
<div class="a" style="left:209.5px;top:599.1px;width:1px;height:1px;background:#bbb"></div>
<div class="a" style="left:200px;top:600.6px;width:20px;height:11px;text-align:center;font-size:9.5px;line-height:11px;color:#333;-webkit-text-stroke:0.2px #333;transform:rotate(-90deg)">5</div>
<div class="a" style="left:209.5px;top:613.2px;width:1px;height:1px;background:#bbb"></div>
<div class="a" style="left:208.5px;top:620.2px;width:3px;height:1px;background:#999"></div>
<div class="a" style="left:209.5px;top:627.2px;width:1px;height:1px;background:#bbb"></div>
<div class="a" style="left:200px;top:628.8px;width:20px;height:11px;text-align:center;font-size:9.5px;line-height:11px;color:#333;-webkit-text-stroke:0.2px #333;transform:rotate(-90deg)">6</div>
<div class="a" style="left:209.5px;top:641.3px;width:1px;height:1px;background:#bbb"></div>
<div class="a" style="left:279.5px;top:264.5px;width:714px;height:402px;border:1px solid #c8c8c8;background:#fff"></div>
<div class="a" style="left:280px;top:265px;width:713px;height:401px"><svg class="a" style="left:0;top:0" width="713" height="401" viewBox="0 0 713 401"><use href="#facet"/></svg><div class="a" style="left:48px;top:43.15px;font-size:26.8px;line-height:26.8px;color:#1c1a3c;font-weight:bold;font-family:'Liberation Serif',serif;--tw:394px;transform:scaleX(0.995);transform-origin:0 0;white-space:nowrap">Спеціальні заходи щодо протидії</div>
<div class="a" style="left:48px;top:74.46px;font-size:26.8px;line-height:26.8px;color:#1c1a3c;font-weight:bold;font-family:'Liberation Serif',serif;--tw:296.4px;transform:scaleX(0.991);transform-origin:0 0;white-space:nowrap">домашньому насильству</div>
<div class="a" style="left:68px;top:132.25px;font-size:20px;line-height:20px;color:#111;font-weight:normal;font-family:'Liberation Serif',serif;transform:scaleX(0.99);transform-origin:0 0;-webkit-text-stroke:0.25px #111;white-space:nowrap">терміновий заборонний припис стосовно кривдника;</div>
<div class="a" style="left:68px;top:164.25px;font-size:20px;line-height:20px;color:#111;font-weight:normal;font-family:'Liberation Serif',serif;transform:scaleX(0.99);transform-origin:0 0;-webkit-text-stroke:0.25px #111;white-space:nowrap">обмежувальний припис стосовно кривдника;</div>
<div class="a" style="left:68px;top:195.25px;font-size:20px;line-height:20px;color:#111;font-weight:normal;font-family:'Liberation Serif',serif;transform:scaleX(0.99);transform-origin:0 0;-webkit-text-stroke:0.25px #111;white-space:nowrap">взяття на профілактичний облік кривдника та</div>
<div class="a" style="left:68px;top:219.25px;font-size:20px;line-height:20px;color:#111;font-weight:normal;font-family:'Liberation Serif',serif;transform:scaleX(0.99);transform-origin:0 0;-webkit-text-stroke:0.25px #111;white-space:nowrap">проведення з ним профілактичної роботи;</div>
<div class="a" style="left:68px;top:251.25px;font-size:20px;line-height:20px;color:#111;font-weight:normal;font-family:'Liberation Serif',serif;transform:scaleX(0.99);transform-origin:0 0;-webkit-text-stroke:0.25px #111;white-space:nowrap">направлення кривдника на проходження</div>
<div class="a" style="left:68px;top:275.25px;font-size:20px;line-height:20px;color:#111;font-weight:normal;font-family:'Liberation Serif',serif;transform:scaleX(0.99);transform-origin:0 0;-webkit-text-stroke:0.25px #111;white-space:nowrap">профілактичної програми.</div>
<svg class="a" style="left:48px;top:136.5px" width="12" height="13"><path d="M0 0 L11.6 6.5 L0 13Z" fill="#8cbf3b"/></svg><svg class="a" style="left:48px;top:168.5px" width="12" height="13"><path d="M0 0 L11.6 6.5 L0 13Z" fill="#8cbf3b"/></svg><svg class="a" style="left:48px;top:199.5px" width="12" height="13"><path d="M0 0 L11.6 6.5 L0 13Z" fill="#8cbf3b"/></svg><svg class="a" style="left:48px;top:255.5px" width="12" height="13"><path d="M0 0 L11.6 6.5 L0 13Z" fill="#8cbf3b"/></svg></div>
</div></div>
<!--/CONTENT-->
<!--RIB--><div class="a" style="left:-5px;top:220.41px;font-size:10.5px;line-height:10.5px;color:#5f5f5f;font-weight:normal;--tw:62px;transform:scaleX(0.873);transform-origin:0 0;white-space:nowrap">Буфер обмена</div>
<svg class="a" style="left:63px;top:223px" width="7" height="7"><path d="M0.5 6.5 V0.5 H6.5" stroke="#999" fill="none"/><path d="M2.5 2.5 L6.5 6.5 M6.5 3.5 V6.5 H3.5" stroke="#999" fill="none"/></svg>
<div class="a" style="left:72px;top:165px;width:1px;height:66px;background:#e1e1e1"></div>
<div class="a" style="left:112px;top:220.41px;font-size:10.5px;line-height:10.5px;color:#5f5f5f;font-weight:normal;--tw:30.7px;transform:scaleX(0.787);transform-origin:0 0;white-space:nowrap">Слайды</div>
<div class="a" style="left:181.5px;top:165px;width:1px;height:66px;background:#e1e1e1"></div>
<div class="a" style="left:249.7px;top:220.41px;font-size:10.5px;line-height:10.5px;color:#5f5f5f;font-weight:normal;--tw:30.3px;transform:scaleX(0.866);transform-origin:0 0;white-space:nowrap">Шрифт</div>
<svg class="a" style="left:351px;top:223px" width="7" height="7"><path d="M0.5 6.5 V0.5 H6.5" stroke="#999" fill="none"/><path d="M2.5 2.5 L6.5 6.5 M6.5 3.5 V6.5 H3.5" stroke="#999" fill="none"/></svg>
<div class="a" style="left:360.5px;top:165px;width:1px;height:66px;background:#e1e1e1"></div>
<div class="a" style="left:416.8px;top:220.41px;font-size:10.5px;line-height:10.5px;color:#5f5f5f;font-weight:normal;--tw:25.1px;transform:scaleX(0.866);transform-origin:0 0;white-space:nowrap">Абзац</div>
<svg class="a" style="left:502px;top:223px" width="7" height="7"><path d="M0.5 6.5 V0.5 H6.5" stroke="#999" fill="none"/><path d="M2.5 2.5 L6.5 6.5 M6.5 3.5 V6.5 H3.5" stroke="#999" fill="none"/></svg>
<div class="a" style="left:511.5px;top:165px;width:1px;height:66px;background:#e1e1e1"></div>
<div class="a" style="left:647.5px;top:220.41px;font-size:10.5px;line-height:10.5px;color:#5f5f5f;font-weight:normal;--tw:44.4px;transform:scaleX(0.838);transform-origin:0 0;white-space:nowrap">Рисование</div>
<svg class="a" style="left:834px;top:223px" width="7" height="7"><path d="M0.5 6.5 V0.5 H6.5" stroke="#999" fill="none"/><path d="M2.5 2.5 L6.5 6.5 M6.5 3.5 V6.5 H3.5" stroke="#999" fill="none"/></svg>
<div class="a" style="left:841.5px;top:165px;width:1px;height:66px;background:#e1e1e1"></div>
<div class="a" style="left:847.2px;top:220.41px;font-size:10.5px;line-height:10.5px;color:#5f5f5f;font-weight:normal;--tw:68.8px;transform:scaleX(0.860);transform-origin:0 0;white-space:nowrap">Редактирование</div>
<div class="a" style="left:921.5px;top:165px;width:1px;height:66px;background:#e1e1e1"></div>
<svg class="a" style="left:1048px;top:223px" width="7" height="5" viewBox="0 0 7 5"><path d="M1 4 L3.5 1.5 L6 4" stroke="#555" stroke-width="1.2" fill="none"/></svg>
<svg class="a" style="left:9px;top:166px" width="24" height="25" viewBox="0 0 24 25"><rect x="1" y="4" width="17" height="20" rx="1" fill="#dcdcdc" stroke="#c8c8c8"/><rect x="5" y="1" width="9" height="5" rx="1" fill="#c9c9c9"/><path d="M10 10 H19 L23 14 V24 H10Z" fill="#f4f4f4" stroke="#bdbdbd"/></svg>
<div class="a" style="left:1px;top:193.09px;font-size:11px;line-height:11px;color:#9a9a9a;font-weight:normal;--tw:37px;transform:scaleX(0.787);transform-origin:0 0;white-space:nowrap">Вставить</div>
<svg class="a" style="left:17.1px;top:209.5px" width="5" height="3"><path d="M0 0 H5 L2.5 3Z" fill="#b0b0b0"/></svg>
<svg class="a" style="left:43px;top:166px" width="13" height="12" viewBox="0 0 13 12"><circle cx="3" cy="9" r="2.3" fill="none" stroke="#4e7fb8" stroke-width="1.2"/><circle cx="10" cy="9" r="2.3" fill="none" stroke="#4e7fb8" stroke-width="1.2"/><path d="M4.5 7 L10 0.5 M8.5 7 L3 0.5" stroke="#555" stroke-width="1.1"/></svg>
<svg class="a" style="left:42px;top:183px" width="14" height="12" viewBox="0 0 14 12"><rect x="0.5" y="0.5" width="8" height="9" fill="#fff" stroke="#666"/><rect x="4.5" y="3.5" width="9" height="8" fill="#fff" stroke="#666"/><path d="M2 3 H6 M2 5 H4 M6 6 H12 M6 8 H12" stroke="#777"/></svg>
<svg class="a" style="left:59.8px;top:184.5px" width="5" height="3"><path d="M0 0 H5 L2.5 3Z" fill="#666"/></svg>
<svg class="a" style="left:43px;top:202px" width="13" height="11" viewBox="0 0 13 11"><path d="M12 1 L6 6" stroke="#555" stroke-width="2"/><path d="M1 10 L5 5 L8 8 L4 11Z" fill="#e5b73b"/></svg>
<svg class="a" style="left:82px;top:166px" width="25" height="21" viewBox="0 0 25 21"><rect x="2.5" y="5.5" width="21" height="15" fill="#fff" stroke="#777"/><rect x="5" y="8" width="16" height="4" fill="#b8b8b8"/><path d="M5 14.5 H21 M5 17 H21" stroke="#aaa"/><circle cx="4" cy="4" r="3" fill="#f7e27a"/><path d="M4 0 V8 M0 4 H8 M1 1 L7 7 M7 1 L1 7" stroke="#e8c84a" stroke-width="0.8"/></svg>
<div class="a" style="left:78.6px;top:192.69px;font-size:11px;line-height:11px;color:#444;font-weight:normal;--tw:33.3px;transform:scaleX(0.793);transform-origin:0 0;white-space:nowrap">Создать</div>
<div class="a" style="left:80px;top:205.09px;font-size:11px;line-height:11px;color:#444;font-weight:normal;--tw:24.5px;transform:scaleX(0.790);transform-origin:0 0;white-space:nowrap">слайд</div>
<svg class="a" style="left:105.5px;top:210.0px" width="5" height="3"><path d="M0 0 H5 L2.5 3Z" fill="#555"/></svg>
<svg class="a" style="left:116px;top:166px" width="13" height="12" viewBox="0 0 13 12"><rect x="0.5" y="0.5" width="12" height="11" fill="#fff" stroke="#666"/><rect x="2.5" y="2.5" width="3" height="7" fill="#c8c8c8"/><path d="M7 3 H11 M7 6 H11 M7 9 H11" stroke="#888"/></svg>
<div class="a" style="left:131.5px;top:166.59px;font-size:11px;line-height:11px;color:#444;font-weight:normal;--tw:26px;transform:scaleX(0.839);transform-origin:0 0;white-space:nowrap">Макет</div>
<svg class="a" style="left:158.5px;top:171.0px" width="5" height="3"><path d="M0 0 H5 L2.5 3Z" fill="#555"/></svg>
<svg class="a" style="left:116px;top:184px" width="13" height="12" viewBox="0 0 13 12"><rect x="2.5" y="2.5" width="10" height="9" fill="#fff" stroke="#666"/><path d="M4 5 H11 M4 7.5 H11" stroke="#aaa"/><path d="M1 4 Q1 0.5 5 0.5 L7 0.5 M5 -1 L7 0.5 L5 2" stroke="#3d7cc9" stroke-width="1.3" fill="none"/></svg>
<div class="a" style="left:131.5px;top:184.89px;font-size:11px;line-height:11px;color:#444;font-weight:normal;--tw:41px;transform:scaleX(0.837);transform-origin:0 0;white-space:nowrap">Сбросить</div>
<svg class="a" style="left:116px;top:202px" width="13" height="12" viewBox="0 0 13 12"><path d="M0 1 H6 M0 3 H4" stroke="#e0b23a" stroke-width="1"/><rect x="3.5" y="4.5" width="9" height="3" fill="#fff" stroke="#666"/><rect x="3.5" y="8.5" width="9" height="3.5" fill="#fff" stroke="#666"/></svg>
<div class="a" style="left:131.5px;top:202.49px;font-size:11px;line-height:11px;color:#444;font-weight:normal;--tw:29px;transform:scaleX(0.806);transform-origin:0 0;white-space:nowrap">Раздел</div>
<svg class="a" style="left:161.0px;top:207.0px" width="5" height="3"><path d="M0 0 H5 L2.5 3Z" fill="#555"/></svg>
<div class="a" style="left:185px;top:169px;width:82px;height:18.5px;border:1px solid #e3e3e3;background:#fff"></div>
<div class="a" style="left:266px;top:169px;width:31px;height:18.5px;border:1px solid #e3e3e3;background:#fff"></div>
<svg class="a" style="left:257.5px;top:176.5px" width="5" height="3"><path d="M0 0 H5 L2.5 3Z" fill="#c9c9c9"/></svg>
<svg class="a" style="left:288.5px;top:176.5px" width="5" height="3"><path d="M0 0 H5 L2.5 3Z" fill="#c9c9c9"/></svg>
<div class="a" style="left:302.5px;top:173.49px;font-size:11px;line-height:11px;color:#b5b5b5;font-weight:normal;white-space:nowrap">A</div>
<svg class="a" style="left:309px;top:173px" width="5" height="3" viewBox="0 0 5 3"><path d="M0 3 L2.5 0 L5 3Z" fill="#b5b5b5"/></svg>
<div class="a" style="left:321px;top:175.18px;font-size:9px;line-height:9px;color:#b5b5b5;font-weight:normal;white-space:nowrap">A</div>
<svg class="a" style="left:327px;top:173px" width="5" height="3" viewBox="0 0 5 3"><path d="M0 0 H5 L2.5 3Z" fill="#b5b5b5"/></svg>
<div class="a" style="left:335px;top:170px;width:1px;height:18px;background:#e1e1e1"></div>
<svg class="a" style="left:342px;top:173px" width="13" height="11" viewBox="0 0 13 11"><path d="M5 1 L12 6 L8 10 L1 5Z" fill="#d0d0d0"/><path d="M1 10 H7" stroke="#e0b0b0"/></svg>
<div class="a" style="left:189px;top:197.99px;font-size:11px;line-height:11px;color:#aeaeae;font-weight:bold;--tw:9.5px;transform:scaleX(0.950);transform-origin:0 0;white-space:nowrap">Ж</div>
<div class="a" style="left:207px;top:197.99px;font-size:11px;line-height:11px;color:#aeaeae;font-weight:normal;--tw:6px;transform:scaleX(1.000);transform-origin:0 0;white-space:nowrap">К</div>
<div class="a" style="left:224px;top:197.19px;font-size:11px;line-height:11px;color:#aeaeae;font-weight:normal;--tw:7.5px;transform:scaleX(1.071);transform-origin:0 0;white-space:nowrap">Ч</div>
<div class="a" style="left:224px;top:208px;width:8px;height:1px;background:#aeaeae"></div>
<div class="a" style="left:243px;top:197.99px;font-size:11px;line-height:11px;color:#aeaeae;font-weight:bold;--tw:6px;transform:scaleX(0.857);transform-origin:0 0;white-space:nowrap">S</div>
<div class="a" style="left:256.3px;top:198.84px;font-size:10px;line-height:10px;color:#aeaeae;font-weight:normal;--tw:12.4px;transform:scaleX(0.775);transform-origin:0 0;white-space:nowrap">abc</div>
<div class="a" style="left:256px;top:203px;width:13px;height:1px;background:#aeaeae"></div>
<div class="a" style="left:274px;top:196.88px;font-size:9px;line-height:9px;color:#aeaeae;font-weight:normal;--tw:10.8px;transform:scaleX(0.982);transform-origin:0 0;white-space:nowrap">AV</div>
<svg class="a" style="left:274px;top:205px" width="11" height="4" viewBox="0 0 11 4"><path d="M0.5 2 H10.5 M2 0.5 L0.5 2 L2 3.5 M9 0.5 L10.5 2 L9 3.5" stroke="#aeaeae" fill="none" stroke-width="0.8"/></svg>
<svg class="a" style="left:289.4px;top:201.5px" width="4" height="3"><path d="M0 0 H4 L2.0 3Z" fill="#c0c0c0"/></svg>
<div class="a" style="left:300px;top:197.99px;font-size:11px;line-height:11px;color:#aeaeae;font-weight:normal;--tw:11.4px;transform:scaleX(0.877);transform-origin:0 0;white-space:nowrap">Aa</div>
<svg class="a" style="left:315.0px;top:201.5px" width="4" height="3"><path d="M0 0 H4 L2.0 3Z" fill="#c0c0c0"/></svg>
<div class="a" style="left:326.5px;top:193px;width:1px;height:17px;background:#e1e1e1"></div>
<div class="a" style="left:335px;top:197.14px;font-size:12px;line-height:12px;color:#aeaeae;font-weight:normal;--tw:8px;transform:scaleX(1.000);transform-origin:0 0;white-space:nowrap">A</div>
<svg class="a" style="left:349.2px;top:201.5px" width="4" height="3"><path d="M0 0 H4 L2.0 3Z" fill="#c0c0c0"/></svg>
<svg class="a" style="left:366.7px;top:172px" width="12" height="12" viewBox="0 0 12 12"><rect x="0.5" y="1.0" width="2" height="2" fill="#b5b5b5"/><path d="M4.5 2.0 H11" stroke="#b0b0b0"/><rect x="0.5" y="5.5" width="2" height="2" fill="#b5b5b5"/><path d="M4.5 6.5 H11" stroke="#b0b0b0"/><rect x="0.5" y="10.0" width="2" height="2" fill="#b5b5b5"/><path d="M4.5 11.0 H11" stroke="#b0b0b0"/></svg>
<svg class="a" style="left:382.7px;top:176.5px" width="4" height="3"><path d="M0 0 H4 L2.0 3Z" fill="#c0c0c0"/></svg>
<svg class="a" style="left:392.6px;top:172px" width="12" height="12" viewBox="0 0 12 12"><text x="0" y="3.5" font-size="4.5" fill="#999">1</text><path d="M4.5 2.0 H11" stroke="#b0b0b0"/><text x="0" y="8.0" font-size="4.5" fill="#999">2</text><path d="M4.5 6.5 H11" stroke="#b0b0b0"/><text x="0" y="12.5" font-size="4.5" fill="#999">3</text><path d="M4.5 11.0 H11" stroke="#b0b0b0"/></svg>
<svg class="a" style="left:410.0px;top:176.5px" width="4" height="3"><path d="M0 0 H4 L2.0 3Z" fill="#c0c0c0"/></svg>
<svg class="a" style="left:421.5px;top:172px" width="13" height="12" viewBox="0 0 13 12"><path d="M0.5 1 H12.5 M6 4 H12.5 M6 7 H12.5 M0.5 10 H12.5" stroke="#b0b0b0"/><path d="M4 5.5 H0.5 M2 4 L0.5 5.5 L2 7" stroke="#999" fill="none"/></svg>
<svg class="a" style="left:438.8px;top:172px" width="13" height="12" viewBox="0 0 13 12"><path d="M0.5 1 H12.5 M6 4 H12.5 M6 7 H12.5 M0.5 10 H12.5" stroke="#b0b0b0"/><path d="M0.5 5.5 H4 M2.5 4 L4 5.5 L2.5 7" stroke="#999" fill="none"/></svg>
<svg class="a" style="left:459px;top:171px" width="12" height="14" viewBox="0 0 12 14"><path d="M5 2 H12 M5 5.5 H12 M5 9 H12 M5 12.5 H12" stroke="#b0b0b0"/><path d="M0.5 3 L2 1 L3.5 3 M0.5 11 L2 13 L3.5 11 M2 1 V13" stroke="#999" fill="none"/></svg>
<svg class="a" style="left:473.5px;top:176.5px" width="4" height="3"><path d="M0 0 H4 L2.0 3Z" fill="#c0c0c0"/></svg>
<svg class="a" style="left:366.7px;top:198px" width="12" height="9" viewBox="0 0 12 9"><path d="M0 0.5 h11" stroke="#b5b5b5"/><path d="M0 3.0 h8" stroke="#b5b5b5"/><path d="M0 5.5 h11" stroke="#b5b5b5"/><path d="M0 8.0 h8" stroke="#b5b5b5"/></svg>
<svg class="a" style="left:384px;top:198px" width="12" height="9" viewBox="0 0 12 9"><path d="M0.0 0.5 h11" stroke="#b5b5b5"/><path d="M1.5 3.0 h8" stroke="#b5b5b5"/><path d="M0.0 5.5 h11" stroke="#b5b5b5"/><path d="M1.5 8.0 h8" stroke="#b5b5b5"/></svg>
<svg class="a" style="left:400.4px;top:198px" width="12" height="9" viewBox="0 0 12 9"><path d="M0 0.5 h11" stroke="#b5b5b5"/><path d="M3 3.0 h8" stroke="#b5b5b5"/><path d="M0 5.5 h11" stroke="#b5b5b5"/><path d="M3 8.0 h8" stroke="#b5b5b5"/></svg>
<svg class="a" style="left:417.6px;top:198px" width="12" height="9" viewBox="0 0 12 9"><path d="M0 0.5 h11" stroke="#b5b5b5"/><path d="M0 3.0 h11" stroke="#b5b5b5"/><path d="M0 5.5 h11" stroke="#b5b5b5"/><path d="M0 8.0 h11" stroke="#b5b5b5"/></svg>
<div class="a" style="left:435.6px;top:195px;width:1px;height:15px;background:#e1e1e1"></div>
<svg class="a" style="left:442.7px;top:198px" width="11" height="9" viewBox="0 0 11 9"><path d="M0 0.5 H4.5 M6.5 0.5 H11 M0 3 H4.5 M6.5 3 H11 M0 5.5 H4.5 M6.5 5.5 H11 M0 8 H4.5 M6.5 8 H11" stroke="#b5b5b5"/></svg>
<svg class="a" style="left:457.0px;top:201.5px" width="4" height="3"><path d="M0 0 H4 L2.0 3Z" fill="#c0c0c0"/></svg>
<svg class="a" style="left:484px;top:166px" width="13" height="12" viewBox="0 0 13 12"><path d="M1 1 V12 M4 1 V12 M7 1 V12" stroke="#b0b0b0"/><path d="M10 12 V2 M8 4 L10 1.5 L12 4" stroke="#999" fill="none"/></svg>
<svg class="a" style="left:499.4px;top:171.0px" width="4" height="3"><path d="M0 0 H4 L2.0 3Z" fill="#c0c0c0"/></svg>
<svg class="a" style="left:484px;top:183.5px" width="13" height="12" viewBox="0 0 13 12"><rect x="0.5" y="0.5" width="12" height="11" fill="none" stroke="#c0c0c0" stroke-dasharray="2 1"/><path d="M6.5 2 V10 M4.5 4 L6.5 2 L8.5 4 M4.5 8 L6.5 10 L8.5 8" stroke="#999" fill="none"/></svg>
<svg class="a" style="left:499.4px;top:187.5px" width="4" height="3"><path d="M0 0 H4 L2.0 3Z" fill="#c0c0c0"/></svg>
<svg class="a" style="left:484px;top:201.5px" width="13" height="12" viewBox="0 0 13 12"><path d="M0 3 Q6 -1 10 4" stroke="#aaa" stroke-width="2" fill="none"/><rect x="4.5" y="5.5" width="8" height="6" fill="#fff" stroke="#999"/><rect x="6.5" y="7.5" width="4" height="2" fill="#ccc"/></svg>
<svg class="a" style="left:499.4px;top:206.0px" width="4" height="3"><path d="M0 0 H4 L2.0 3Z" fill="#c0c0c0"/></svg>
<div class="a" style="left:515px;top:166px;width:108px;height:47px;border:1px solid #d0d0d0;background:#fff"></div>
<div class="a" style="left:611px;top:166px;width:1px;height:47px;background:#d8d8d8"></div>
<div class="a" style="left:611px;top:182px;width:12px;height:1px;background:#d8d8d8"></div>
<div class="a" style="left:611px;top:197px;width:12px;height:1px;background:#d8d8d8"></div>
<svg class="a" style="left:614px;top:173px" width="6" height="3" viewBox="0 0 6 3"><path d="M0 3 L3 0 L6 3Z" fill="#c8c8c8"/></svg>
<svg class="a" style="left:614.0px;top:188.0px" width="6" height="3"><path d="M0 0 H6 L3.0 3Z" fill="#555"/></svg>
<svg class="a" style="left:614px;top:203px" width="6" height="6" viewBox="0 0 6 6"><path d="M0 0.5 H6" stroke="#555"/><path d="M0 2.5 H6 L3 5.5Z" fill="#555"/></svg>
<svg class="a" style="left:517.0px;top:167.0px" width="13" height="13" viewBox="0 0 13 13"><rect x="0.5" y="1.5" width="12" height="8" fill="none" stroke="#555"/><path d="M2 3.5 H6 M2 5.5 H10 M2 7.5 H10" stroke="#5b7fb6"/></svg>
<svg class="a" style="left:532.7px;top:167.0px" width="13" height="13" viewBox="0 0 13 13"><path d="M1 1 L12 10" stroke="#555"/></svg>
<svg class="a" style="left:548.4px;top:167.0px" width="13" height="13" viewBox="0 0 13 13"><path d="M1 1 L12 10 M12 10 L8 9.5 M12 10 L11 6.5" stroke="#555" fill="none"/></svg>
<svg class="a" style="left:564.1px;top:167.0px" width="13" height="13" viewBox="0 0 13 13"><rect x="0.5" y="1.5" width="12" height="8" fill="none" stroke="#555"/></svg>
<svg class="a" style="left:579.8px;top:167.0px" width="13" height="13" viewBox="0 0 13 13"><ellipse cx="6.5" cy="5.5" rx="6" ry="4.5" fill="none" stroke="#555"/></svg>
<svg class="a" style="left:595.5px;top:167.0px" width="13" height="13" viewBox="0 0 13 13"><rect x="0.5" y="1.5" width="12" height="8" rx="2" fill="none" stroke="#555"/></svg>
<svg class="a" style="left:517.0px;top:182.5px" width="13" height="13" viewBox="0 0 13 13"><path d="M6.5 0.5 L12.5 11 H0.5Z" fill="none" stroke="#555"/></svg>
<svg class="a" style="left:532.7px;top:182.5px" width="13" height="13" viewBox="0 0 13 13"><path d="M1 1.5 H5.5 V10.5 H12" fill="none" stroke="#555"/></svg>
<svg class="a" style="left:548.4px;top:182.5px" width="13" height="13" viewBox="0 0 13 13"><path d="M1 1.5 H5.5 V10.5 H12 M10 8.5 L12 10.5 L10 12.5" fill="none" stroke="#555"/></svg>
<svg class="a" style="left:564.1px;top:182.5px" width="13" height="13" viewBox="0 0 13 13"><path d="M0.5 4 H6.5 V1 L12.5 6 L6.5 11 V8 H0.5Z" fill="none" stroke="#555"/></svg>
<svg class="a" style="left:579.8px;top:182.5px" width="13" height="13" viewBox="0 0 13 13"><path d="M4 0.5 H9 V6 H12 L6.5 11.5 L1 6 H4Z" fill="none" stroke="#555"/></svg>
<svg class="a" style="left:595.5px;top:182.5px" width="13" height="13" viewBox="0 0 13 13"><path d="M1 11 V4 Q1 1 4 1 H8 Q12 2 12 6 Q12 11 6 11Z" fill="none" stroke="#555"/></svg>
<svg class="a" style="left:517.0px;top:198.0px" width="13" height="13" viewBox="0 0 13 13"><path d="M4 11 Q1 9 4 7 Q8 5 4 3 Q2 1 5 1 M6 11 Q9 10 7 8" fill="none" stroke="#555"/></svg>
<svg class="a" style="left:532.7px;top:198.0px" width="13" height="13" viewBox="0 0 13 13"><path d="M0.5 2 Q9 1 12 11" fill="none" stroke="#555"/></svg>
<svg class="a" style="left:548.4px;top:198.0px" width="13" height="13" viewBox="0 0 13 13"><path d="M0.5 11 Q3 1 6 1 Q9 1 12 11" fill="none" stroke="#555"/></svg>
<svg class="a" style="left:564.1px;top:198.0px" width="13" height="13" viewBox="0 0 13 13"><path d="M8 1 Q6 1 6 3 V5 L4.5 6 L6 7 V9 Q6 11 8 11" fill="none" stroke="#555"/></svg>
<svg class="a" style="left:579.8px;top:198.0px" width="13" height="13" viewBox="0 0 13 13"><path d="M5 1 Q7 1 7 3 V5 L8.5 6 L7 7 V9 Q7 11 5 11" fill="none" stroke="#555"/></svg>
<svg class="a" style="left:595.5px;top:198.0px" width="13" height="13" viewBox="0 0 13 13"><path d="M6.5 0.5 L8 4.5 L12.5 4.6 L9 7.3 L10.3 11.5 L6.5 9 L2.7 11.5 L4 7.3 L0.5 4.6 L5 4.5Z" fill="none" stroke="#555"/></svg>
<svg class="a" style="left:643px;top:167px" width="22" height="21" viewBox="0 0 22 21"><rect x="0.5" y="0.5" width="9" height="9" fill="#fff" stroke="#555"/><rect x="6" y="4" width="10" height="10" fill="#e8cd7e"/><rect x="0" y="10" width="8" height="7" fill="#e8cd7e"/><rect x="11.5" y="10.5" width="9" height="9" fill="#fff" stroke="#555"/></svg>
<div class="a" style="left:626.2px;top:193.09px;font-size:11px;line-height:11px;color:#444;font-weight:normal;--tw:56.4px;transform:scaleX(0.868);transform-origin:0 0;white-space:nowrap">Упорядочить</div>
<svg class="a" style="left:652.5px;top:210.2px" width="5" height="3"><path d="M0 0 H5 L2.5 3Z" fill="#555"/></svg>
<svg class="a" style="left:697px;top:167px" width="24" height="23" viewBox="0 0 24 23"><rect x="1" y="1" width="20" height="20" rx="5" fill="#e6e6e6" stroke="#d0d0d0"/><path d="M12 19 L22 8" stroke="#bbb" stroke-width="3"/></svg>
<div class="a" style="left:687px;top:193.69px;font-size:11px;line-height:11px;color:#9a9a9a;font-weight:normal;--tw:43.3px;transform:scaleX(0.849);transform-origin:0 0;white-space:nowrap">Экспресс-</div>
<div class="a" style="left:694px;top:205.69px;font-size:11px;line-height:11px;color:#9a9a9a;font-weight:normal;--tw:24.5px;transform:scaleX(0.845);transform-origin:0 0;white-space:nowrap">стили</div>
<svg class="a" style="left:719.5px;top:210.0px" width="4" height="3"><path d="M0 0 H4 L2.0 3Z" fill="#bbb"/></svg>
<svg class="a" style="left:735px;top:166px" width="14" height="12" viewBox="0 0 14 12"><path d="M3 4 L7 0.5 L12 5 L7 9.5Z" fill="#eee" stroke="#c0c0c0"/><path d="M0 11 H14" stroke="#e8e8e8" stroke-width="2"/></svg>
<div class="a" style="left:750px;top:167.19px;font-size:11px;line-height:11px;color:#a3a3a3;font-weight:normal;--tw:71.8px;transform:scaleX(0.855);transform-origin:0 0;white-space:nowrap">Заливка фигуры</div>
<svg class="a" style="left:823.9px;top:172.0px" width="4" height="3"><path d="M0 0 H4 L2.0 3Z" fill="#c0c0c0"/></svg>
<svg class="a" style="left:735px;top:184px" width="12" height="10" viewBox="0 0 12 10"><rect x="0.5" y="1.5" width="8" height="8" fill="none" stroke="#b8b8b8"/><path d="M5 6 L11 0.5" stroke="#999" stroke-width="1.3"/></svg>
<div class="a" style="left:750.7px;top:184.29px;font-size:11px;line-height:11px;color:#a3a3a3;font-weight:normal;--tw:65.7px;transform:scaleX(0.853);transform-origin:0 0;white-space:nowrap">Контур фигуры</div>
<svg class="a" style="left:819.8px;top:189.0px" width="4" height="3"><path d="M0 0 H4 L2.0 3Z" fill="#c0c0c0"/></svg>
<svg class="a" style="left:734.6px;top:202.5px" width="12" height="10" viewBox="0 0 12 10"><ellipse cx="6" cy="5" rx="5.5" ry="4" fill="#d9d9d9"/><path d="M1 5 Q6 10 11 5" fill="#c4c4c4"/></svg>
<div class="a" style="left:750px;top:202.69px;font-size:11px;line-height:11px;color:#a3a3a3;font-weight:normal;--tw:75.9px;transform:scaleX(0.825);transform-origin:0 0;white-space:nowrap">Эффекты фигуры</div>
<svg class="a" style="left:828.6px;top:207.5px" width="4" height="3"><path d="M0 0 H4 L2.0 3Z" fill="#c0c0c0"/></svg>
<svg class="a" style="left:847px;top:168px" width="13" height="10" viewBox="0 0 13 10"><rect x="0.5" y="3" width="5" height="7" rx="1" fill="#555"/><rect x="7.5" y="3" width="5" height="7" rx="1" fill="#555"/><rect x="4" y="1" width="5" height="5" fill="#444"/><path d="M2 0 V3 M11 0 V3" stroke="#555" stroke-width="2"/></svg>
<div class="a" style="left:862.6px;top:167.69px;font-size:11px;line-height:11px;color:#444;font-weight:normal;--tw:25.7px;transform:scaleX(0.829);transform-origin:0 0;white-space:nowrap">Найти</div>
<svg class="a" style="left:847px;top:184px" width="14" height="11" viewBox="0 0 14 11"><text x="0" y="5" font-size="6.5" fill="#444" font-family="Liberation Sans">ab</text><text x="1" y="11" font-size="6.5" fill="#3b6fb5" font-family="Liberation Sans">ac</text><path d="M0 7.5 H4" stroke="#3b6fb5"/></svg>
<div class="a" style="left:862.6px;top:184.69px;font-size:11px;line-height:11px;color:#444;font-weight:normal;--tw:40.8px;transform:scaleX(0.833);transform-origin:0 0;white-space:nowrap">Заменить</div>
<svg class="a" style="left:911.1px;top:189.5px" width="5" height="3"><path d="M0 0 H5 L2.5 3Z" fill="#555"/></svg>
<svg class="a" style="left:850px;top:202px" width="9" height="11" viewBox="0 0 9 11"><path d="M1 0.5 V9.5 L3.5 7 L5.5 10.5 L7 9.8 L5 6.5 H8.5Z" fill="#fff" stroke="#555"/></svg>
<div class="a" style="left:862.6px;top:202.69px;font-size:11px;line-height:11px;color:#444;font-weight:normal;--tw:41.4px;transform:scaleX(0.812);transform-origin:0 0;white-space:nowrap">Выделить</div>
<svg class="a" style="left:906.0px;top:207.5px" width="5" height="3"><path d="M0 0 H5 L2.5 3Z" fill="#555"/></svg>
<!--/RIB-->
<!-- shield badge -->
<div class="a" style="left:3px;top:130px;width:25px;height:23px;background:#3a3a3a;border-radius:5px"></div>
<svg class="a" style="left:7px;top:133px" width="17" height="17"><path d="M8.5 1 L15 3.5 V8 Q15 13.5 8.5 16 Q2 13.5 2 8 V3.5Z" fill="#2fbf4f"/><path d="M5 8.5 L7.5 11 L12 6" stroke="#103318" stroke-width="1.6" fill="none"/></svg>
<div class="a" style="left:40px;top:134px;width:14px;height:14px;border-radius:50%;background:radial-gradient(circle at 50% 45%,#ff8a80 0,#f0443a 45%,rgba(240,80,70,.35) 70%,rgba(255,120,110,0) 100%)"></div>
</div>
<!-- TOOLBAR -->
<div id="bar" class="a">
  <svg class="a" style="left:27px;top:5px" width="28" height="25" viewBox="0 0 28 25"><rect x="9" y="1" width="9" height="14" rx="4.5" fill="#c9c9c9"/><path d="M5 10 Q5 18.5 13.5 18.5 Q22 18.5 22 10" stroke="#c9c9c9" stroke-width="2" fill="none"/><path d="M13.5 18.5 V22 M9 23 H18" stroke="#c9c9c9" stroke-width="2"/><path d="M2 24 L26 2" stroke="#e5484d" stroke-width="2.2"/></svg>
  <svg class="a" style="left:69px;top:15px" width="9" height="6"><path d="M1 5 L4.5 1.5 L8 5" stroke="#ccc" stroke-width="1.5" fill="none"/></svg>
  <div class="lbl" style="left:19px;--tw:43.6px;transform:scaleX(0.991);transform-origin:0 0">Unmute</div>
  <svg class="a" style="left:120px;top:5px" width="28" height="25" viewBox="0 0 28 25"><rect x="2" y="6" width="17" height="14" rx="2" fill="#c9c9c9"/><path d="M19 10.5 L26 6.5 V19.5 L19 15.5Z" fill="#c9c9c9"/><path d="M2 24 L25 2" stroke="#e5484d" stroke-width="2.2"/></svg>
  <svg class="a" style="left:167px;top:15px" width="9" height="6"><path d="M1 5 L4.5 1.5 L8 5" stroke="#ccc" stroke-width="1.5" fill="none"/></svg>
  <div class="lbl" style="left:104px;--tw:59px;transform:scaleX(0.952);transform-origin:0 0">Start Video</div>
  <svg class="a" style="left:299px;top:7px" width="26" height="19" viewBox="0 0 26 19"><circle cx="8" cy="5" r="4.3" fill="#c9c9c9"/><path d="M0.5 18.5 Q0.5 10.5 8 10.5 Q15.5 10.5 15.5 18.5Z" fill="#c9c9c9"/><circle cx="18" cy="6" r="3.7" fill="#c9c9c9"/><path d="M13 11.5 Q15 10 18 10 Q25.5 10 25.5 18.5 H17 Q17 14 13 11.5Z" fill="#c9c9c9"/></svg>
  <div class="a" style="left:328px;top:8px;font-size:12px;color:#d0d0d0;line-height:12px">17</div>
  <svg class="a" style="left:360px;top:15px" width="9" height="6"><path d="M1 5 L4.5 1.5 L8 5" stroke="#ccc" stroke-width="1.5" fill="none"/></svg>
  <div class="lbl" style="left:281.5px;--tw:62px;transform:scaleX(0.954);transform-origin:0 0">Participants</div>
  <svg class="a" style="left:411px;top:7px" width="22" height="19" viewBox="0 0 22 19"><path d="M2 0.5 H20 Q21.5 0.5 21.5 2 V12 Q21.5 13.5 20 13.5 H9 L4 18 V13.5 H2 Q0.5 13.5 0.5 12 V2 Q0.5 0.5 2 0.5Z" fill="#c9c9c9"/></svg>
  <div class="a" style="left:425px;top:1px;width:16px;height:16px;border-radius:50%;background:#e02828;border:1.5px solid #1a1a1a"></div>
  <div class="a" style="left:425px;top:3.5px;width:16px;text-align:center;font-size:10px;line-height:11px;color:#fff;font-weight:bold">1</div>
  <svg class="a" style="left:451px;top:15px" width="9" height="6"><path d="M1 5 L4.5 1.5 L8 5" stroke="#ccc" stroke-width="1.5" fill="none"/></svg>
  <div class="lbl" style="left:410px;--tw:24.5px;transform:scaleX(0.942);transform-origin:0 0">Chat</div>
  <div class="a" style="left:504px;top:8px;width:24px;height:18px;border-radius:3px;background:#23d959"></div>
  <svg class="a" style="left:510px;top:11px" width="12" height="12"><path d="M6 11 V2 M2 5.5 L6 1.5 L10 5.5" stroke="#0d3b1a" stroke-width="2" fill="none"/></svg>
  <div class="lbl" style="left:481px;color:#23d959;--tw:69.4px;transform:scaleX(0.913);transform-origin:0 0">Share Screen</div>
  <svg class="a" style="left:594px;top:7px" width="22" height="20"><circle cx="11" cy="10" r="9.2" fill="none" stroke="#c9c9c9" stroke-width="1.6"/><circle cx="11" cy="10" r="7" fill="#c9c9c9"/></svg>
  <div class="lbl" style="left:586.5px;--tw:36.2px;transform:scaleX(0.905);transform-origin:0 0">Record</div>
  <div class="a" style="left:680px;top:8px;width:24px;height:18px;border-radius:3px;background:#c9c9c9"></div>
  <div class="a" style="left:680px;top:12px;width:24px;text-align:center;font-size:10px;line-height:10px;font-weight:bold;color:#3a3a3a">CC</div>
  <svg class="a" style="left:723px;top:15px" width="9" height="6"><path d="M1 5 L4.5 1.5 L8 5" stroke="#ccc" stroke-width="1.5" fill="none"/></svg>
  <div class="lbl" style="left:653px;--tw:78.7px;transform:scaleX(0.937);transform-origin:0 0">Show Captions</div>
  <svg class="a" style="left:770px;top:5px" width="23" height="22" viewBox="0 0 23 22"><circle cx="9.5" cy="12" r="9" fill="#c9c9c9"/><circle cx="6.5" cy="10" r="1.2" fill="#1a1a1a"/><circle cx="12.5" cy="10" r="1.2" fill="#1a1a1a"/><path d="M5.5 14 Q9.5 18 13.5 14" stroke="#1a1a1a" stroke-width="1.4" fill="none"/><circle cx="18" cy="5" r="5" fill="#1a1a1a"/><path d="M18 1 V9 M14 5 H22" stroke="#c9c9c9" stroke-width="1.6"/></svg>
  <div class="lbl" style="left:754.5px;--tw:50.5px;transform:scaleX(0.902);transform-origin:0 0">Reactions</div>
  <svg class="a" style="left:851px;top:9px" width="18" height="17" viewBox="0 0 18 17"><path d="M1 6 V3 Q1 1 3 1 H7 M1 10 V13 Q1 16 4 16 M7 16 H14 Q17 16 17 13 V10" stroke="#c9c9c9" stroke-width="1.7" fill="none"/><circle cx="13.5" cy="4" r="2.6" fill="none" stroke="#c9c9c9" stroke-width="1.6"/><circle cx="4" cy="12.5" r="2.2" fill="none" stroke="#c9c9c9" stroke-width="1.5"/></svg>
  <div class="lbl" style="left:846.6px;--tw:26.4px;transform:scaleX(0.910);transform-origin:0 0">Apps</div>
  <div class="a" style="left:991px;top:13px;width:61px;height:27px;border-radius:6px;background:#c8262b"></div>
  <div class="a" style="left:991px;top:20px;width:61px;text-align:center;font-size:12.5px;line-height:13px;font-weight:bold;color:#fff">Leave</div>
</div>
</body></html>
